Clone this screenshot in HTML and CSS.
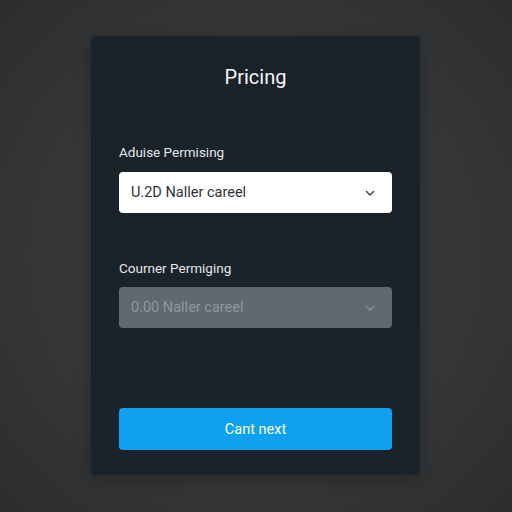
FILE: index.html
```html
<!DOCTYPE html>
<html lang="en">
<head>
    <meta charset="UTF-8">
    <meta name="viewport" content="width=device-width, initial-scale=1.0">
    <title>Pricing</title>
    <link rel="stylesheet" href="styles.css">
</head>
<body>
    <div class="card">
        <h2 class="title">Pricing</h2>

        <label class="field-label">Aduise Permising</label>
        <div class="select">
            <span>U.2D Naller careel</span>
            <svg class="chevron" width="12" height="12" viewBox="0 0 12 12"><path d="M2.5 4.5 L6 8 L9.5 4.5" fill="none" stroke="currentColor" stroke-width="1.4" stroke-linecap="round" stroke-linejoin="round"/></svg>
        </div>

        <label class="field-label second">Courner Permiging</label>
        <div class="select disabled">
            <span>0.00 Naller careel</span>
            <svg class="chevron" width="12" height="12" viewBox="0 0 12 12"><path d="M2.5 4.5 L6 8 L9.5 4.5" fill="none" stroke="currentColor" stroke-width="1.4" stroke-linecap="round" stroke-linejoin="round"/></svg>
        </div>

        <button class="btn-next">Cant next</button>
    </div>
</body>
</html>
```

FILE: styles.css
```css
html, body {
    height: 100%;
}

body {
    margin: 0;
    padding: 36px 0 0;
    box-sizing: border-box;
    font-family: Roboto, "Noto Sans", Arial, sans-serif;
    background: radial-gradient(ellipse at center, #3a3b3c 0%, #353637 60%, #2c2d2e 100%);
}

.card {
    width: 329px;
    height: 439px;
    margin: 0 0 0 91px;
    box-sizing: border-box;
    padding: 29px 28px 25px;
    background: #1a222a;
    border-radius: 4px;
    display: flex;
    flex-direction: column;
    box-shadow: 0 4px 16px rgba(0, 0, 0, 0.25);
}

.title {
    margin: 0;
    font-size: 20px;
    line-height: 24px;
    font-weight: 400;
    color: #f4f6f8;
    text-align: center;
}

.field-label {
    margin-top: 55px;
    font-size: 13.5px;
    line-height: 16px;
    color: #e4e7ea;
}

.field-label.second {
    margin-top: 47px;
}

.select {
    margin-top: 12px;
    height: 41px;
    box-sizing: border-box;
    padding: 0 12px;
    border-radius: 4px;
    background: #ffffff;
    color: #2e3338;
    font-size: 14.5px;
    display: flex;
    align-items: center;
    justify-content: space-between;
}

.select .chevron {
    color: #3a4046;
    margin-right: 4px;
}

.select.disabled {
    margin-top: 11px;
    background: #5e6972;
    color: #8e989f;
}

.select.disabled .chevron {
    color: #8a949b;
}

.btn-next {
    margin-top: auto;
    height: 42px;
    border: none;
    border-radius: 4px;
    background: #0ea1f0;
    color: #ffffff;
    font-family: inherit;
    font-size: 14.5px;
    font-weight: 400;
    cursor: pointer;
}
```
